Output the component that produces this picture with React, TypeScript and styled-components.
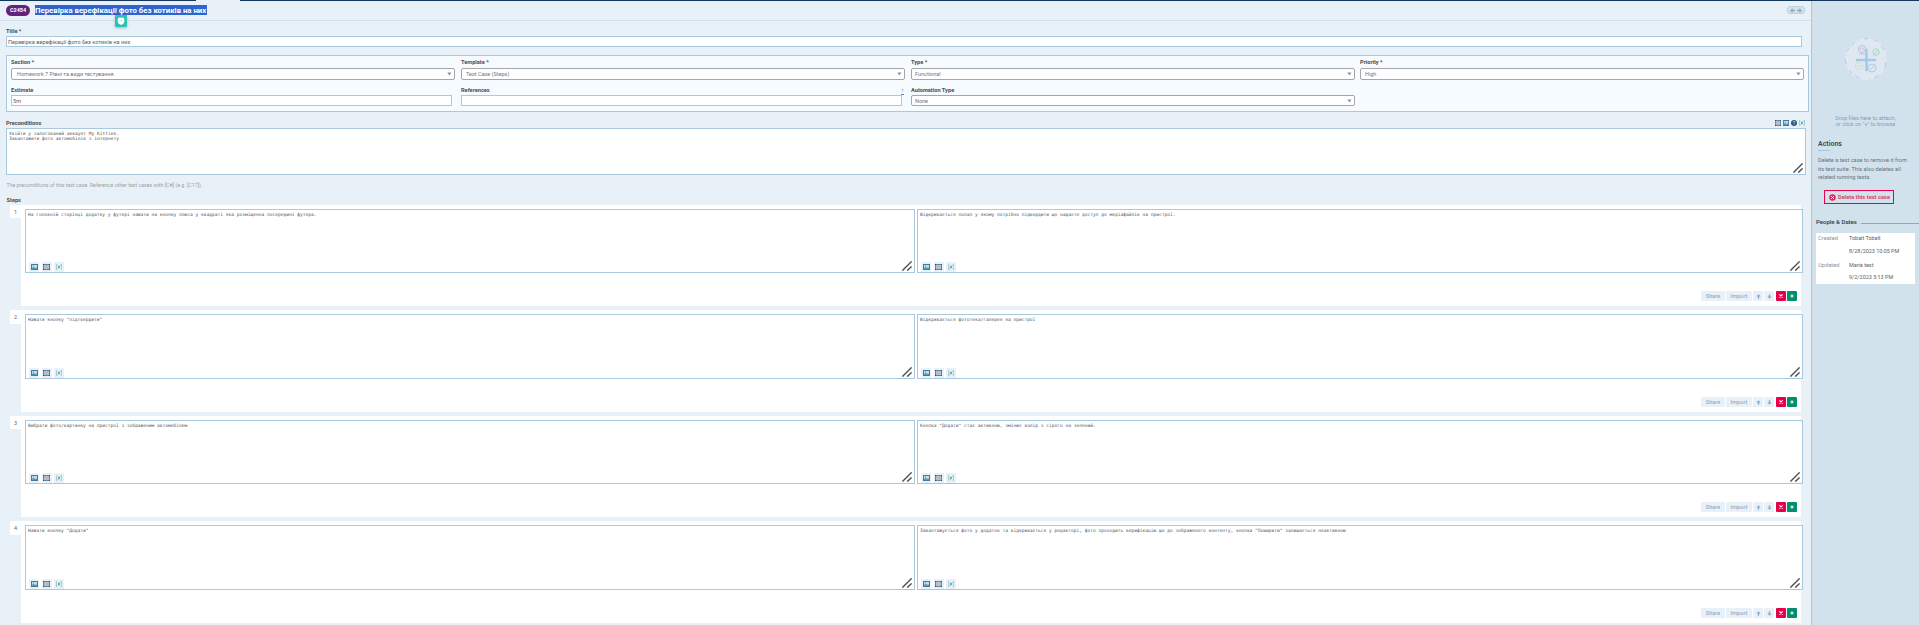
import React from 'react';
import styled, { createGlobalStyle } from 'styled-components';

const Global = createGlobalStyle`
  * { box-sizing: border-box; }
  body { margin: 0; background: #e9f1f8; overflow: hidden; font-family: Roboto, "Liberation Sans", sans-serif; color: #5d6166; }
`;

const Page = styled.div`
  height: 625px;
  overflow: hidden;
  display: flex;
  flex-direction: column;
`;
const TopLine = styled.div`
  flex: none;
  height: 1px;
  background: linear-gradient(90deg, #12365c 196px, #e9f1f8 196px, #e9f1f8 240px, #12365c 240px);
`;
const Columns = styled.div`
  display: flex;
  flex: 1;
  min-height: 0;
`;
const Main = styled.main`
  width: 1811px;
  flex: none;
`;
const Header = styled.header`
  height: 20px;
  border-bottom: 1px solid #cfe1ec;
  padding: 0 6px 0 6px;
  display: flex;
  align-items: flex-start;
`;
const Badge = styled.div`
  width: 24px;
  height: 11px;
  margin-top: 4px;
  border-radius: 6px;
  background: #652279;
  color: #fff;
  font-size: 5.5px;
  font-weight: 700;
  line-height: 11.5px;
  text-align: center;
`;
const HeadTitle = styled.h1`
  position: relative;
  margin: 4px auto 0 5px;
  height: 10px;
  width: 172px;
  white-space: nowrap;
  background: #2e64cf;
  color: #fff;
  font-size: 7.78px;
  font-weight: 700;
  line-height: 11px;
`;
const CursorTag = styled.span`
  position: absolute;
  left: 80px;
  top: 10px;
  width: 12px;
  height: 12px;
  border-radius: 1px;
  background: #2bc3b5;
  box-shadow: 0 1px 3px rgba(60, 90, 120, 0.4);
  display: flex;
  align-items: center;
  justify-content: center;
`;
const NavPill = styled.div`
  width: 18px;
  height: 8px;
  margin-top: 5px;
  border: 1px solid #b7d3e5;
  border-radius: 3px;
  background: #d0e2ee;
  display: flex;
  align-items: center;
  justify-content: space-evenly;
`;

const Label = styled.div<{ $h?: number }>`
  height: ${p => p.$h ?? 10}px;
  line-height: ${p => p.$h ?? 10}px;
  font-size: 5.65px;
  font-weight: 700;
  color: #4a4d51;
  white-space: nowrap;
`;
const TitleBlock = styled.section`
  padding: 5px 0 0 6px;
`;
const Input = styled.div<{ $w: number }>`
  width: ${p => p.$w}px;
  height: 11px;
  border: 1px solid #a9c9df;
  background: #fff;
  font-size: 5.62px;
  line-height: 11px;
  padding-left: 1px;
  white-space: nowrap;
`;
const Group = styled.section`
  margin: 8px 0 0 6px;
  width: 1803px;
  height: 57px;
  border: 1px solid #a9c9df;
  background: #f6fbff;
  padding: 1px 0 0 4px;
  display: grid;
  grid-template-columns: 450px 450px 449px 449px;
  grid-template-rows: 23px 21px;
  row-gap: 5px;
`;
const LabelRow = styled.div`
  display: flex;
  justify-content: space-between;
  width: 443px;
`;
const Help = styled.span`
  height: 7px;
  margin-top: 3px;
  width: 3px;
  font-size: 5px;
  line-height: 6px;
  color: #6f9dc4;
  border-bottom: 1px solid #4b8dbf;
`;
const SelectBox = styled.div<{ $h: number; $indent?: number }>`
  width: 444px;
  height: ${p => p.$h}px;
  border: 1px solid #a5a6a8;
  border-radius: 2px;
  background: #fff;
  padding: 0 2px 0 ${p => p.$indent ?? 3}px;
  font-size: 5.5px;
  color: #74777b;
  display: flex;
  align-items: center;
  justify-content: space-between;
  white-space: nowrap;
`;
const PreHead = styled.div`
  height: 16px;
  padding: 6px 5px 0 6px;
  display: flex;
  justify-content: space-between;
`;
const PreIcons = styled.div`
  display: flex;
  gap: 2px;
  padding-top: 2px;
  height: 8px;
  width: 31px;
`;
const TextArea = styled.div<{ $w: number }>`
  position: relative;
  width: ${p => p.$w}px;
  border: 1px solid #a9c9df;
  background: #fff;
  padding: 2px 0 0 2px;
  font-family: "DejaVu Sans Mono", "Liberation Mono", monospace;
  font-size: 4.573px;
  line-height: 5.3px;
  color: #54575b;
  white-space: pre;
`;
const PreArea = styled(TextArea)`
  margin-left: 6px;
  height: 47px;
`;
const ResizeGrip = styled.svg`
  position: absolute;
  right: 2px;
  bottom: 1px;
  width: 10px;
  height: 10px;
`;
const AreaTools = styled.div`
  position: absolute;
  left: 3px;
  bottom: 0;
  display: flex;
  gap: 2.5px;
`;
const ToolButton = styled.div`
  width: 10px;
  height: 10px;
  background: #e9f1f8;
  display: flex;
  align-items: center;
  justify-content: center;
`;
const Hint = styled.p`
  margin: 0 0 0 6.5px;
  height: 20px;
  line-height: 20px;
  font-size: 5.26px;
  color: #9ca1a6;
`;
const StepsLabel = styled(Label)`
  margin-left: 6.5px;
`;
const Steps = styled.div`
  display: flex;
  flex-direction: column;
  gap: 4px;
  padding-left: 10px;
`;
const StepRow = styled.div<{ $tall: boolean }>`
  display: flex;
  height: ${p => (p.$tall ? 102 : 101)}px;
`;
const StepNumber = styled.div<{ $tall: boolean }>`
  width: 11px;
  height: ${p => (p.$tall ? 14 : 13)}px;
  background: #fff;
  font-size: 5.4px;
  line-height: 14px;
  text-align: center;
`;
const StepBody = styled.div`
  width: 1780px;
  background: #fff;
  padding: 4px 0 5px 4px;
  display: flex;
  flex-direction: column;
  justify-content: space-between;
`;
const Areas = styled.div<{ $tall: boolean }>`
  display: flex;
  gap: 2px;
  width: 1778px;
  height: ${p => (p.$tall ? 65 : 64)}px;
`;
const StepActions = styled.div`
  display: flex;
  justify-content: flex-end;
  gap: 1px;
  padding-right: 4px;
`;
const ActionButton = styled.div<{ $w: number; $bg?: string; $gap?: boolean }>`
  width: ${p => p.$w}px;
  height: 10px;
  margin-left: ${p => (p.$gap ? 1 : 0)}px;
  border-radius: 1px;
  background: ${p => p.$bg ?? '#e9f1f8'};
  color: #96aac2;
  font-size: 5.6px;
  font-weight: 500;
  display: flex;
  align-items: center;
  justify-content: center;
`;

const Sidebar = styled.aside`
  width: 108px;
  border-left: 1px solid #a9c7df;
  background: #d1e2ec;
`;
const DropZone = styled.div`
  height: 126px;
  padding-top: 36px;
  display: flex;
  flex-direction: column;
  align-items: center;
  font-size: 5.6px;
  line-height: 6px;
  color: #819dbf;
`;
const DropArt = styled.svg`
  width: 44px;
  height: 44px;
  margin-bottom: 34px;
  flex: none;
`;
const SideHeading = styled.h2<{ $size: number }>`
  margin: 0;
  font-size: ${p => p.$size}px;
  line-height: 10px;
  font-weight: 600;
  color: #3d4853;
  white-space: nowrap;
`;
const Actions = styled.section`
  padding: 12px 0 0 6px;
`;
const Rule = styled.div`
  width: 12px;
  height: 1px;
  margin-top: 1px;
  background: #a5c8e0;
`;
const Paragraph = styled.p`
  margin: 5px 0 0;
  font-size: 5.63px;
  line-height: 8.5px;
  color: #6b7179;
  white-space: nowrap;
`;
const DeleteButton = styled.div`
  margin: 8.5px 0 0 6px;
  width: 70px;
  height: 14px;
  border: 1px solid #e8004c;
  padding-left: 4px;
  display: flex;
  align-items: center;
  gap: 2px;
  font-size: 5.7px;
  font-weight: 700;
  line-height: 12px;
  color: #e2406a;
  white-space: nowrap;
`;
const DeleteIcon = styled.svg`
  margin-top: 1px;
  flex: none;
`;
const PeopleHead = styled.div`
  margin-top: 12.5px;
  padding-left: 4px;
  display: flex;
  align-items: center;
  gap: 4px;
`;
const PeopleRule = styled.div`
  flex: 1;
  height: 1px;
  margin-top: 4px;
  background: #7fadcc;
`;
const Card = styled.div`
  margin: 6px 0 0 4px;
  width: 99px;
  height: 51px;
  border-radius: 1px;
  background: #fff;
  padding-left: 2px;
  display: grid;
  grid-template-columns: 31px 1fr;
  grid-template-rows: 11px 14px 14px 10px;
  align-items: center;
  font-size: 5.45px;
  white-space: nowrap;
`;
const Key = styled.span`
  font-size: 5.75px;
  color: #8d9399;
`;

const Caret = () => (
  <svg width="5" height="4" viewBox="0 0 5 4"><path d="M0.3 0.6h4.2L2.4 3.5z" fill="#8496a6" /></svg>
);
const Grip = () => (
  <ResizeGrip viewBox="0 0 10 10"><path d="M0.4 9.6L9.6 0.4M5.2 9.6L9.6 5.4" stroke="#4e4e52" strokeWidth="1.4" /></ResizeGrip>
);
const ImageIcon = ({ w = 7 }: { w?: number }) => (
  <svg width={w} height="6" viewBox="0 0 7 6" preserveAspectRatio="none">
    <path d="M0 0h7v6H0z" fill="#4779a0" /><path d="M1 1h5v4H1z" fill="#c2e0ea" />
    <path d="M1 4l1.6-1.4L4 4l1-.8 1 .8v1H1z" fill="#5b9bb8" /><path d="M2 1.5h1v1H2z" fill="#4fb09c" />
  </svg>
);
const TableIcon = ({ w = 7 }: { w?: number }) => (
  <svg width={w} height="6" viewBox="0 0 7 6" preserveAspectRatio="none">
    <path d="M0 0h7v6H0z" fill="#67869f" /><path d="M1 1h5v4H1z" fill="#b8bdc4" />
    <path d="M0 0h1v1H0zM6 0h1v1H6zM0 5h1v1H0zM6 5h1v1H6z" fill="#1f5480" />
  </svg>
);
const VariableIcon = () => (
  <svg width="6" height="6" viewBox="0 0 7 6" preserveAspectRatio="none" fill="none">
    <path d="M1.5 0.3H0.5v5.4h1M5.5 0.3h1v5.4h-1" stroke="#82b3ca" strokeWidth="0.7" />
    <path d="M2.1 4.6L4.9 1.3M2.4 1.8l2.1 2.5" stroke="#2aa58c" strokeWidth="0.9" />
  </svg>
);
const HelpIcon = () => (
  <svg width="6" height="6" viewBox="0 0 6 6" fill="none">
    <circle cx="3" cy="3" r="3" fill="#2c587d" />
    <path d="M2 2.2c0-1.2 2-1.2 2 0 0 .8-1 .7-1 1.4M3 4.4v.6" stroke="#dbe8f1" strokeWidth="0.7" />
  </svg>
);
const Arrow = ({ turn, color = '#86aecb' }: { turn: number; color?: string }) => (
  <svg width="5" height="5" viewBox="0 0 5 5"><path transform={`rotate(${turn} 2.5 2.5)`} d="M2.5 0.2L4.7 2.6H3.2V4.8H1.8V2.6H0.3z" fill={color} /></svg>
);

const Select = ({ label, value, h = 12, indent }: { label: string; value: string; h?: number; indent?: number }) => (
  <div>
    <Label $h={h === 11 ? 10 : 11}>{label}</Label>
    <SelectBox $h={h} $indent={indent}>{value}<Caret /></SelectBox>
  </div>
);

const StepArea = ({ w, text }: { w: number; text: string }) => (
  <TextArea $w={w}>
    {text}
    <AreaTools>
      <ToolButton><ImageIcon /></ToolButton>
      <ToolButton><TableIcon /></ToolButton>
      <ToolButton><VariableIcon /></ToolButton>
    </AreaTools>
    <Grip />
  </TextArea>
);

const steps: [string, string][] = [
  ['На головній сторінці додатку у футері нажати на кнопку плюса у квадраті яка розміщенна посередині футера.',
    'Відкривається попап у якому потрібно підвердити що надаєте доступ до медіафайлів на пристрої.'],
  ['Нажати кнопку "підтвердити"', 'Відкривається фототека/галерея на пристрої'],
  ['Вибрати фото/картинку на пристрої з зображеним автомобілем',
    'Кнопка "Додати" стає активною, змінює колір з сірого на зелений.'],
  ['Нажати кнопку "Додати"',
    'Завантажується фото у додаток та відкривається у редакторі, фото проходить верифікацію що до зображеного контенту, кнопка "Поширити" залишається неактивною'],
];

export default function App() {
  return (
    <Page>
      <Global />
      <TopLine />
      <Columns>
        <Main>
          <Header>
            <Badge>C2454</Badge>
            <HeadTitle>
              Перевірка верефікації фото без котиків на них
              <CursorTag>
                <svg width="8" height="8" viewBox="0 0 8 8">
                  <path d="M1 1.2L2.4 0.4 4 0.8 6 0.5 7.3 2v3L6 7.2 3.5 7.7 1.4 6.4 0.6 4z" fill="#fff" />
                  <path d="M2.6 2.6l2.6 2M5.4 2.4l-.6 1" stroke="#8adcd4" strokeWidth="0.7" />
                </svg>
              </CursorTag>
            </HeadTitle>
            <NavPill><Arrow turn={-90} color="#9a9fa6" /><Arrow turn={90} color="#9a9fa6" /></NavPill>
          </Header>
          <TitleBlock>
            <Label>Title *</Label>
            <Input $w={1796}>Перевірка верефікації фото без котиків на них</Input>
          </TitleBlock>
          <Group>
            <Select label="Section *" value="Homework 7 Рівні та види тестування" indent={5} />
            <Select label="Template *" value="Test Case (Steps)" indent={4} />
            <Select label="Type *" value="Functional" />
            <Select label="Priority *" value="High" indent={4} />
            <div>
              <Label>Estimate</Label>
              <Input $w={441}>5m</Input>
            </div>
            <div>
              <LabelRow><Label>References</Label><Help>?</Help></LabelRow>
              <Input $w={441} />
            </div>
            <Select label="Automation Type" value="None" h={11} />
          </Group>
          <PreHead>
            <Label>Preconditions</Label>
            <PreIcons><TableIcon w={6} /><ImageIcon w={6} /><HelpIcon /><VariableIcon /></PreIcons>
          </PreHead>
          <PreArea $w={1800}>{'Увійти у залогований аккаунт My Kitties.\nЗавантажити фото автомобілів з інтернету'}<Grip /></PreArea>
          <Hint>The preconditions of this test case. Reference other test cases with [C#] (e.g. [C17]).</Hint>
          <StepsLabel>Steps</StepsLabel>
          <Steps>
            {steps.map(([action, expected], i) => {
              const tall = i % 2 === 1;
              return (
                <StepRow key={i} $tall={tall}>
                  <StepNumber $tall={tall}>{i + 1}</StepNumber>
                  <StepBody>
                    <Areas $tall={tall}>
                      <StepArea w={890} text={action} />
                      <StepArea w={886} text={expected} />
                    </Areas>
                    <StepActions>
                      <ActionButton $w={24}>Share</ActionButton>
                      <ActionButton $w={26}>Import</ActionButton>
                      <ActionButton $w={10}><Arrow turn={0} /></ActionButton>
                      <ActionButton $w={10}><Arrow turn={180} /></ActionButton>
                      <ActionButton $w={10} $bg="#e6004c" $gap>
                        <svg width="4" height="4" viewBox="0 0 4 4"><path d="M.4.4l3.2 3.2M3.6.4L.4 3.6" stroke="#fff" strokeWidth="1.1" /></svg>
                      </ActionButton>
                      <ActionButton $w={10} $bg="#048f6c">
                        <svg width="4" height="4" viewBox="0 0 4 4"><path d="M2 .3v3.4M.3 2h3.4" stroke="#fff" strokeWidth="1" /></svg>
                      </ActionButton>
                    </StepActions>
                  </StepBody>
                </StepRow>
              );
            })}
          </Steps>
        </Main>
        <Sidebar>
          <DropZone>
            <DropArt viewBox="0 0 44 44" fill="none">
              <circle cx="22" cy="22" r="19.5" fill="#dfe8f1" />
              <circle cx="22" cy="22" r="20" stroke="#e0e8f1" strokeWidth="2.2" strokeDasharray="8 1.6" />
              <path d="M8 8l3-3M20 2l4-.8M37 9l3 4M42 25l-1 5M34 39l-4 2M15 41l-4-3M2 27l-.8-5" stroke="#a9d0e6" strokeWidth="1" />
              <path d="M3 15l2-4M29 2.4l4 1.6M5 33l3 3" stroke="#dcc3d4" strokeWidth="1" />
              <circle cx="18" cy="12" r="3.6" stroke="#bdbfe0" /><path d="M16 13c1-3 3-3 4 0M15 17h6" stroke="#bdbfe0" />
              <circle cx="32" cy="15" r="3.2" stroke="#a6dcc3" /><path d="M29 19l5-6" stroke="#a6dcc3" />
              <circle cx="15" cy="29" r="3.6" stroke="#d3dccb" /><path d="M13 29h4" stroke="#d3dccb" />
              <circle cx="28" cy="31" r="4" stroke="#a9cbe8" /><path d="M26 33l4-4" stroke="#a9cbe8" />
              <path d="M12 23h20M22.5 12v22" stroke="#a3c7e6" strokeWidth="2.4" />
            </DropArt>
            <div>Drop files here to attach,</div>
            <div>or click on "+" to browse</div>
          </DropZone>
          <Actions>
            <SideHeading $size={7.01}>Actions</SideHeading>
            <Rule />
            <Paragraph>Delete a test case to remove it from<br />its test suite. This also deletes all<br />related running tests.</Paragraph>
            <DeleteButton>
              <DeleteIcon width="7" height="7" viewBox="0 0 7 7"><circle cx="3.5" cy="3.5" r="3.2" fill="#e0245c" /><path d="M2.1 2.1l2.8 2.8M4.9 2.1L2.1 4.9" stroke="#fff" strokeWidth="0.9" /></DeleteIcon>
              Delete this test case
            </DeleteButton>
          </Actions>
          <PeopleHead><SideHeading $size={6.01}>People &amp; Dates</SideHeading><PeopleRule /></PeopleHead>
          <Card>
            <Key>Created</Key><span>Tobalt Tobalt</span>
            <span /><span>8/28/2023 10:05 PM</span>
            <Key>Updated</Key><span>Maria test</span>
            <span /><span>9/2/2023 5:13 PM</span>
          </Card>
        </Sidebar>
      </Columns>
    </Page>
  );
}
